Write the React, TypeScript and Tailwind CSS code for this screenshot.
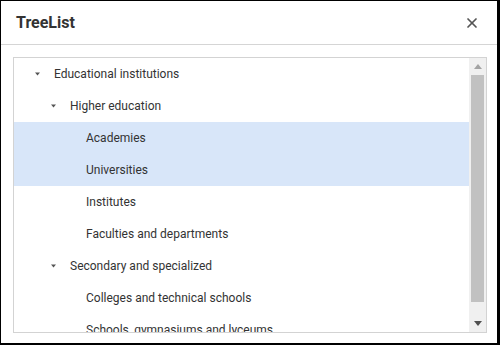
import { X } from "lucide-react";

interface Node {
  label: string;
  level: number;
  expanded?: boolean;
  selected?: boolean;
}

const nodes: Node[] = [
  { label: "Educational institutions", level: 0, expanded: true },
  { label: "Higher education", level: 1, expanded: true },
  { label: "Academies", level: 2, selected: true },
  { label: "Universities", level: 2, selected: true },
  { label: "Institutes", level: 2 },
  { label: "Faculties and departments", level: 2 },
  { label: "Secondary and specialized", level: 1, expanded: true },
  { label: "Colleges and technical schools", level: 2 },
  { label: "Schools, gymnasiums and lyceums", level: 2 },
];

const indent = ["pl-[21px]", "pl-[37px]", "pl-[53px]"];

function Arrow() {
  return (
    <svg width="5" height="4" viewBox="0 0 5 4" className="mr-[14px] shrink-0">
      <path d="M0 0.5 H5 L2.5 3.5 Z" fill="#555" />
    </svg>
  );
}

function TreeRow({ node }: { node: Node }) {
  return (
    <div
      className={`flex h-[32px] shrink-0 items-center ${indent[node.level]} ${
        node.selected ? "bg-[#d8e6f9]" : ""
      }`}
    >
      {node.expanded ? <Arrow /> : <span className="w-[19px] shrink-0" />}
      <span className="whitespace-nowrap">{node.label}</span>
    </div>
  );
}

function Scrollbar() {
  return (
    <div className="flex w-[17px] shrink-0 flex-col bg-[#f0f0f0]">
      <div className="flex h-[17px] items-center justify-center">
        <svg width="8" height="5" viewBox="0 0 8 5">
          <path d="M0 5 L4 0 L8 5 Z" fill="#a3a3a3" />
        </svg>
      </div>
      <div className="mx-[2px] h-[227px] bg-[#c1c1c1]" />
      <div className="flex-1" />
      <div className="flex h-[17px] items-center justify-center">
        <svg width="8" height="5" viewBox="0 0 8 5">
          <path d="M0 0 L8 0 L4 5 Z" fill="#505050" />
        </svg>
      </div>
    </div>
  );
}

export default function App() {
  return (
    <div
      className="flex h-[345px] w-[500px] flex-col border-t border-l border-r-[3px] border-b-2 border-black bg-white text-[#333]"
      style={{ fontFamily: "Roboto, 'Liberation Sans', sans-serif" }}
    >
      <div className="flex h-[44px] shrink-0 items-center justify-between border-b border-[#d5d5d5] pl-[15px] pr-[17px]">
        <h2 className="text-[16px] font-bold text-[#333]">TreeList</h2>
        <X size={16} strokeWidth={2.6} className="text-[#555]" />
      </div>
      <div className="flex min-h-0 flex-1 flex-col pl-[12px] pr-[10px] pt-[12px] pb-[10px]">
        <div className="flex min-h-0 flex-1 overflow-hidden border border-[#d3d3d3]">
          <div className="flex min-w-0 flex-1 flex-col overflow-hidden text-[12px]">
            {nodes.map((n) => (
              <TreeRow key={n.label} node={n} />
            ))}
          </div>
          <Scrollbar />
        </div>
      </div>
    </div>
  );
}
